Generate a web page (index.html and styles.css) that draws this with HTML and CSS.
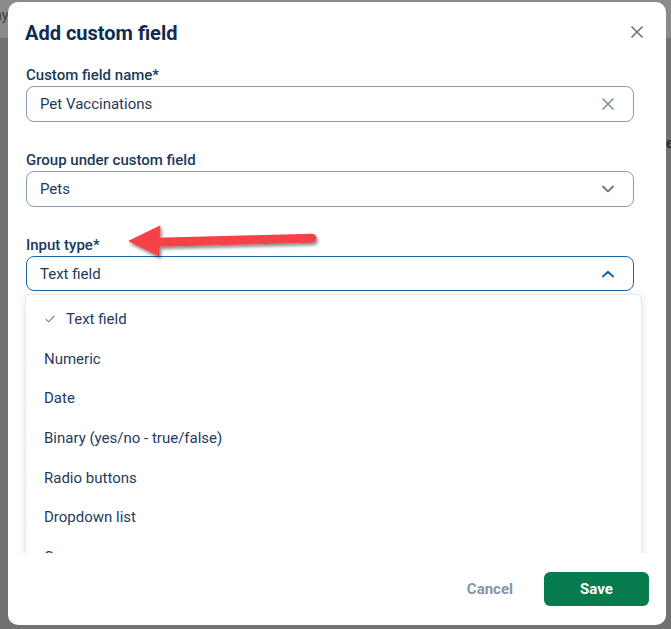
FILE: index.html
```html
<!DOCTYPE html>
<html lang="en">
<head>
<meta charset="utf-8">
<title>Add custom field</title>
<link rel="stylesheet" href="styles.css">
</head>
<body>
<div class="backdrop-text backdrop-left">ny</div>
<div class="backdrop-text backdrop-right">e</div>
<div class="dialog">
  <div class="header">
    <h2 class="title">Add custom field</h2>
    <button class="close" aria-label="Close">
      <svg width="12" height="12" viewBox="0 0 12 12"><path d="M1 1L11 11M11 1L1 11" stroke="#5e7a95" stroke-width="1.7" stroke-linecap="round" fill="none"/></svg>
    </button>
  </div>
  <div class="body">
    <div class="field">
      <label class="label">Custom field name*</label>
      <div class="input">
        <span class="value">Pet Vaccinations</span>
        <svg class="icon" width="12" height="12" viewBox="0 0 12 12"><path d="M1 1L11 11M11 1L1 11" stroke="#7b8fa4" stroke-width="1.6" stroke-linecap="round" fill="none"/></svg>
      </div>
    </div>
    <div class="field">
      <label class="label">Group under custom field</label>
      <div class="input">
        <span class="value">Pets</span>
        <svg class="icon" width="12" height="8" viewBox="0 0 12 8"><path d="M1 1.5L6 6.3L11 1.5" stroke="#5f7489" stroke-width="1.8" stroke-linecap="round" stroke-linejoin="round" fill="none"/></svg>
      </div>
    </div>
    <div class="field field-open">
      <label class="label">Input type*</label>
      <div class="input input-focus">
        <span class="value">Text field</span>
        <svg class="icon" width="12" height="8" viewBox="0 0 12 8"><path d="M1 6.5L6 1.7L11 6.5" stroke="#1565a8" stroke-width="1.9" stroke-linecap="round" stroke-linejoin="round" fill="none"/></svg>
      </div>
      <ul class="menu">
        <li class="menu-item selected">
          <svg class="check" width="10" height="8" viewBox="0 0 10 8"><path d="M0.8 4.2L3.6 6.8L9.3 1" stroke="#6f7d8c" stroke-width="1.1" fill="none"/></svg>
          Text field
        </li>
        <li class="menu-item">Numeric</li>
        <li class="menu-item">Date</li>
        <li class="menu-item">Binary (yes/no - true/false)</li>
        <li class="menu-item">Radio buttons</li>
        <li class="menu-item">Dropdown list</li>
        <li class="menu-item">Currency</li>
        <li class="menu-item">Percentage</li>
      </ul>
    </div>
  </div>
  <div class="footer">
    <button class="btn btn-cancel">Cancel</button>
    <button class="btn btn-save">Save</button>
  </div>
</div>
<svg class="annotation" width="671" height="629" viewBox="0 0 671 629">
  <defs>
    <filter id="sh" x="-20%" y="-50%" width="140%" height="200%">
      <feDropShadow dx="1.5" dy="2.5" stdDeviation="1.8" flood-color="#000" flood-opacity="0.45"/>
    </filter>
  </defs>
  <g filter="url(#sh)" fill="#f5434a" stroke="#f5434a">
    <path d="M156 242.2L312 238.2" stroke-width="9" stroke-linecap="round" fill="none"/>
    <path d="M129 241L160 226L159 256Z" stroke-width="1" stroke-linejoin="round"/>
  </g>
</svg>
</body>
</html>
```
FILE: styles.css
```css
* {
  box-sizing: border-box;
}

html, body {
  margin: 0;
  padding: 0;
  height: 100%;
}

body {
  font-family: Roboto, "Noto Sans", Arial, sans-serif;
  background: linear-gradient(to bottom, #8a8a8a 0, #8a8a8a 38px, #727272 38px);
  overflow: hidden;
  position: relative;
}

.backdrop-text {
  position: absolute;
  font-size: 14px;
  color: #3d3d3d;
}

.backdrop-left {
  left: -6px;
  top: 7px;
}

.backdrop-right {
  left: 666px;
  top: 135px;
  font-weight: 600;
  color: #2a2a2a;
}

.dialog {
  position: relative;
  margin: 2px 0 0 8px;
  width: 658px;
  height: 623px;
  background: #ffffff;
  border-radius: 10px;
  display: flex;
  flex-direction: column;
  overflow: hidden;
}

.header {
  display: flex;
  align-items: center;
  justify-content: space-between;
  padding: 19px 17px 0 17px;
  height: 43px;
  flex: none;
}

.title {
  margin: 0;
  font-size: 20px;
  line-height: 24px;
  font-weight: 700;
  color: #0e2d50;
}

.close {
  width: 24px;
  height: 24px;
  border: 0;
  background: none;
  padding: 0;
  display: flex;
  align-items: center;
  justify-content: center;
  margin-top: -3px;
}

.body {
  flex: 1;
  overflow: hidden;
  padding: 20px 32px 0 18px;
  display: flex;
  flex-direction: column;
  gap: 28px;
}

.field {
  position: relative;
  display: flex;
  flex-direction: column;
}

.label {
  font-size: 15px;
  line-height: 20px;
  font-weight: 500;
  color: #1a3a5c;
  margin-bottom: 1px;
}

.input {
  height: 36px;
  border: 1px solid #8b9db2;
  border-radius: 8px;
  display: flex;
  align-items: center;
  justify-content: space-between;
  padding: 0 19px 0 13px;
}

.input-focus {
  border-color: #1b67a6;
  height: 35px;
}

.value {
  font-size: 15px;
  color: #1f3a5a;
}

.icon {
  flex: none;
}

.menu {
  position: absolute;
  top: calc(100% + 3px);
  left: -1px;
  width: 617px;
  margin: 0;
  padding: 4px 0;
  list-style: none;
  background: #ffffff;
  border: 1px solid #e7e9ec;
  border-radius: 5px;
  box-shadow: 0 2px 8px rgba(0, 0, 0, 0.12);
}

.menu-item {
  height: 39.7px;
  display: flex;
  align-items: center;
  padding-left: 18px;
  font-size: 15px;
  color: #1f3b5e;
}

.check {
  margin-left: 1px;
  margin-right: 11px;
}

.footer {
  flex: none;
  height: 72px;
  display: flex;
  align-items: center;
  justify-content: flex-end;
  gap: 15px;
  padding: 0 17px 0 0;
}

.btn {
  font-family: Roboto, "Noto Sans", Arial, sans-serif;
  font-size: 15px;
  font-weight: 700;
  border: 0;
  height: 34px;
  cursor: pointer;
}

.btn-cancel {
  background: none;
  color: #8594a5;
  padding: 0 16px;
}

.btn-save {
  width: 105px;
  background: #067c4e;
  color: #ffffff;
  border-radius: 6px;
}

.annotation {
  position: absolute;
  left: 0;
  top: 0;
  pointer-events: none;
}
```
